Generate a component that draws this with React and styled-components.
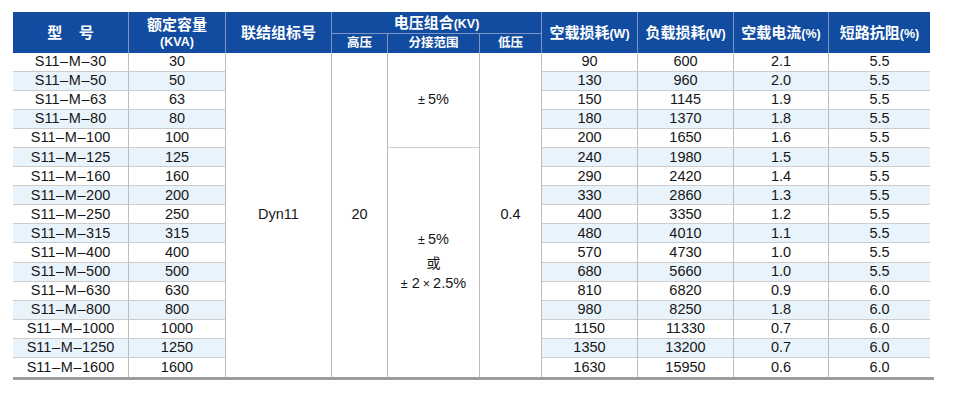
import React from "react";
import styled, { createGlobalStyle } from "styled-components";

const Global = createGlobalStyle`
  html, body { margin: 0; padding: 0; background: #ffffff; }
  body {
    font-family: "Liberation Sans", Arial, "Noto Sans CJK SC", sans-serif;
    color: #161616;
  }
`;

const Page = styled.div`
  padding: 12px 0 0 13px;
`;

const Sheet = styled.div`
  display: inline-flex;
  flex-direction: column;
`;

const Grid = styled.div`
  display: grid;
  grid-template-columns: 116px 97px 106px 56px 92px 62px 96px 96px 95px 101px;
  grid-template-rows: 22px 19px repeat(17, 19.06px);
  width: 917px;
`;

const Head = styled.div`
  box-sizing: border-box;
  background: #114ca0;
  color: #ffffff;
  font-family: "Liberation Sans", "Noto Sans CJK SC", sans-serif;
  font-weight: 700;
  font-size: ${(p) => (p.$sub ? "12.5px" : "15px")};
  line-height: 1.3;
  display: flex;
  flex-direction: column;
  align-items: center;
  justify-content: center;
  text-align: center;
  white-space: nowrap;
  border-right: ${(p) => (p.$last ? "none" : "1px solid #7f96c2")};
  border-bottom: ${(p) => (p.$under ? "1px solid #7f96c2" : "none")};
  grid-row: span ${(p) => p.$rows || 1};
  grid-column: span ${(p) => p.$cols || 1};
`;

const Unit = styled.span`
  font-size: 12.5px;
  font-weight: 700;
`;

const Cell = styled.div`
  box-sizing: border-box;
  background: ${(p) => (p.$stripe ? "#e9f3fc" : "#ffffff")};
  font-size: 14.5px;
  display: flex;
  flex-direction: column;
  align-items: center;
  justify-content: center;
  text-align: center;
  white-space: nowrap;
  line-height: 21.5px;
  border-right: ${(p) => (p.$last ? "none" : "1px solid #bdbdbd")};
  border-bottom: ${(p) => (p.$end ? "none" : "1px solid #cdcdcd")};
  grid-row: span ${(p) => p.$rows || 1};
`;

const Dash = styled.span`
  margin: 0 0.6px;
`;

const Sym = styled.span`
  font-size: 12.5px;
  margin: 0 ${(p) => p.$gap || 2}px 0 ${(p) => p.$lead || 0}px;
`;

const Han = styled.span`
  font-family: "Noto Sans CJK SC", sans-serif;
  font-size: 14px;
`;

const Rule = styled.div`
  width: 921px;
  height: 3px;
  background: #9c9c9c;
`;

const rows = [
  ["S11–M–30", "30", "90", "600", "2.1", "5.5"],
  ["S11–M–50", "50", "130", "960", "2.0", "5.5"],
  ["S11–M–63", "63", "150", "1145", "1.9", "5.5"],
  ["S11–M–80", "80", "180", "1370", "1.8", "5.5"],
  ["S11–M–100", "100", "200", "1650", "1.6", "5.5"],
  ["S11–M–125", "125", "240", "1980", "1.5", "5.5"],
  ["S11–M–160", "160", "290", "2420", "1.4", "5.5"],
  ["S11–M–200", "200", "330", "2860", "1.3", "5.5"],
  ["S11–M–250", "250", "400", "3350", "1.2", "5.5"],
  ["S11–M–315", "315", "480", "4010", "1.1", "5.5"],
  ["S11–M–400", "400", "570", "4730", "1.0", "5.5"],
  ["S11–M–500", "500", "680", "5660", "1.0", "5.5"],
  ["S11–M–630", "630", "810", "6820", "0.9", "6.0"],
  ["S11–M–800", "800", "980", "8250", "1.8", "6.0"],
  ["S11–M–1000", "1000", "1150", "11330", "0.7", "6.0"],
  ["S11–M–1250", "1250", "1350", "13200", "0.7", "6.0"],
  ["S11–M–1600", "1600", "1630", "15950", "0.6", "6.0"],
];

function Model({ name }) {
  const parts = name.split("–");
  return (
    <span>
      {parts.map((p, i) => (
        <React.Fragment key={i}>
          {i > 0 && <Dash>–</Dash>}
          {p}
        </React.Fragment>
      ))}
    </span>
  );
}

export default function App() {
  const n = rows.length;
  return (
    <Page>
      <Global />
      <Sheet>
        <Grid>
          <Head $rows={2}>型&nbsp;&nbsp;&nbsp;&nbsp;号</Head>
          <Head $rows={2}>
            <span>额定容量</span>
            <Unit>(KVA)</Unit>
          </Head>
          <Head $rows={2}>联结组标号</Head>
          <Head $cols={3} $under>
            <span>
              电压组合<Unit>(KV)</Unit>
            </span>
          </Head>
          <Head $rows={2}>
            <span>
              空载损耗<Unit>(W)</Unit>
            </span>
          </Head>
          <Head $rows={2}>
            <span>
              负载损耗<Unit>(W)</Unit>
            </span>
          </Head>
          <Head $rows={2}>
            <span>
              空载电流<Unit>(%)</Unit>
            </span>
          </Head>
          <Head $rows={2} $last>
            <span>
              短路抗阻<Unit>(%)</Unit>
            </span>
          </Head>
          <Head $sub>高压</Head>
          <Head $sub>分接范围</Head>
          <Head $sub>低压</Head>

          {rows.map((r, i) => {
            const stripe = i % 2 === 1;
            const end = i === n - 1;
            return (
              <React.Fragment key={r[0]}>
                <Cell $stripe={stripe} $end={end}>
                  <Model name={r[0]} />
                </Cell>
                <Cell $stripe={stripe} $end={end}>{r[1]}</Cell>
                {i === 0 && (
                  <>
                    <Cell $rows={n} $end>Dyn11</Cell>
                    <Cell $rows={n} $end>20</Cell>
                    <Cell $rows={5}>
                      <span>
                        <Sym $gap={3}>±</Sym>5%
                      </span>
                    </Cell>
                    <Cell $rows={n} $end>0.4</Cell>
                  </>
                )}
                {i === 5 && (
                  <Cell $rows={12} $end>
                    <span>
                      <Sym $gap={3}>±</Sym>5%
                    </span>
                    <Han>或</Han>
                    <span>
                      <Sym $gap={4}>±</Sym>2<Sym $lead={3} $gap={3}>×</Sym>2.5%
                    </span>
                  </Cell>
                )}
                <Cell $stripe={stripe} $end={end}>{r[2]}</Cell>
                <Cell $stripe={stripe} $end={end}>{r[3]}</Cell>
                <Cell $stripe={stripe} $end={end}>{r[4]}</Cell>
                <Cell $stripe={stripe} $end={end} $last>{r[5]}</Cell>
              </React.Fragment>
            );
          })}
        </Grid>
        <Rule />
      </Sheet>
    </Page>
  );
}
